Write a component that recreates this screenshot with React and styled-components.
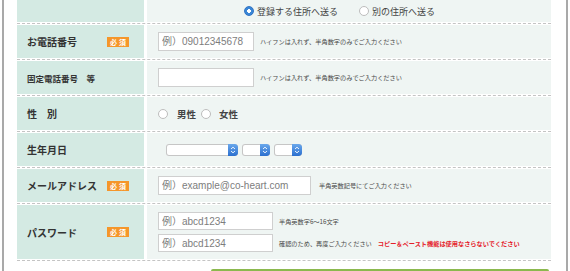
import styled, { createGlobalStyle } from "styled-components";

const Global = createGlobalStyle`
  html, body {
    margin: 0;
    padding: 0;
    overflow: hidden;
    background: #fff;
  }
  body {
    font-family: "Noto Sans CJK JP", "Liberation Sans", sans-serif;
    color: #333;
  }
`;

const Frame = styled.div`
  margin-left: 2px;
  width: 534px;
  border-left: 2px solid #a9a9a9;
  border-right: 2px solid #a9a9a9;
  padding: 0 15px 0 13px;
  height: 271px;
  overflow: hidden;
`;

const Table = styled.div`
  display: flex;
  flex-direction: column;
  width: 534px;
`;

const Row = styled.div`
  display: grid;
  grid-template-columns: 127px 1fr;
  column-gap: 3px;
  padding: ${(p) => (p.$first ? "0 0 1px" : "1px 0")};
  border-bottom: 1px dashed #c4c4c4;
  height: ${(p) => p.$h}px;
`;

const Label = styled.div`
  background: #d4eae3;
  display: flex;
  align-items: center;
  justify-content: space-between;
  padding: 0 15px 0 10px;
  font-size: ${(p) => p.$size || 10}px;
  font-weight: 700;
  color: #333;
  white-space: pre;
`;

const Badge = styled.span`
  display: inline-flex;
  align-items: center;
  justify-content: center;
  width: 22px;
  height: 10px;
  background: #f5962a;
  color: #fff;
  font-size: 7px;
  font-weight: 700;
  letter-spacing: 2px;
  padding-left: 2px;
  box-sizing: border-box;
`;

const Value = styled.div`
  background: #eff5f3;
  display: flex;
  flex-direction: ${(p) => (p.$stack ? "column" : "row")};
  justify-content: ${(p) => (p.$stack ? "center" : "flex-start")};
  align-items: ${(p) => (p.$stack ? "flex-start" : "center")};
  padding-left: ${(p) => p.$pad ?? 11}px;
  gap: ${(p) => (p.$stack ? "4px" : "0")};
`;

const Line = styled.div`
  display: flex;
  align-items: center;
`;

const Input = styled.input`
  width: ${(p) => p.$w}px;
  height: ${(p) => p.$h || 19}px;
  box-sizing: border-box;
  border: 1px solid #cfcfcf;
  background: #fff;
  padding: 0 0 0 3px;
  margin: 0 ${(p) => p.$gap || 6}px 0 0;
  font-family: "Liberation Sans", "Noto Sans CJK JP", sans-serif;
  font-size: 10px;
  outline: none;
  &::placeholder {
    color: #7d7d7d;
  }
`;

const Hint = styled.span`
  font-size: 6.2px;
  color: ${(p) => (p.$red ? "#e5202a" : "#4a4a4a")};
  font-weight: ${(p) => (p.$red ? 700 : 400)};
  margin-left: ${(p) => p.$ml || 0}px;
  white-space: nowrap;
`;

const Radio = styled.span`
  display: inline-block;
  width: 10px;
  height: 10px;
  border-radius: 50%;
  box-sizing: border-box;
  background: ${(p) =>
    p.$on ? "radial-gradient(circle, #fff 0 1.6px, #3a86d6 2px)" : "#fff"};
  border: 1px solid ${(p) => (p.$on ? "#2f73c4" : "#bdbdbd")};
  margin-right: ${(p) => p.$mr || 4}px;
`;

const Choice = styled.span`
  display: inline-flex;
  align-items: center;
  font-size: ${(p) => p.$size || 9}px;
  font-weight: ${(p) => p.$weight || 400};
  color: #444;
  margin-right: ${(p) => p.$mr || 0}px;
`;

const Select = styled.div`
  display: flex;
  width: ${(p) => p.$w}px;
  height: 12px;
  margin-right: 4px;
  border-radius: 3px;
  background: #fff;
  box-shadow: 0 0 0 1px #c6c6c6 inset;
  justify-content: flex-end;
  overflow: hidden;
`;

const Stepper = styled.div`
  width: 10px;
  height: 12px;
  border-radius: 0 3px 3px 0;
  background: linear-gradient(#6aa8ec, #2b6fcf);
  display: flex;
  align-items: center;
  justify-content: center;
`;

const Chevrons = () => (
  <svg width="6" height="8" viewBox="0 0 6 8">
    <path
      d="M1 3 L3 1.2 L5 3 M1 5 L3 6.8 L5 5"
      fill="none"
      stroke="#fff"
      strokeWidth="0.9"
    />
  </svg>
);

const Footer = styled.div`
  display: flex;
  justify-content: flex-end;
  padding: 8px 2px 0 0;
  width: 534px;
  box-sizing: border-box;
`;

const Button = styled.div`
  width: 338px;
  height: 30px;
  background: linear-gradient(#8cb94f, #74a33a);
  border-radius: 2px;
`;

export default function App() {
  return (
    <>
      <Global />
      <Frame>
        <Table>
          <Row $first $h={22}>
            <Label />
            <Value $pad={97}>
              <Choice $mr={21}>
                <Radio $on $mr={3} />
                登録する住所へ送る
              </Choice>
              <Choice>
                <Radio $mr={3} />
                別の住所へ送る
              </Choice>
            </Value>
          </Row>
          <Row $h={33}>
            <Label>
              お電話番号<Badge>必須</Badge>
            </Label>
            <Value>
              <Input $w={96} placeholder="例）09012345678" />
              <Hint>ハイフンは入れず、半角数字のみでご入力ください</Hint>
            </Value>
          </Row>
          <Row $h={33}>
            <Label $size={8.5}>固定電話番号　等</Label>
            <Value>
              <Input $w={96} />
              <Hint>ハイフンは入れず、半角数字のみでご入力ください</Hint>
            </Value>
          </Row>
          <Row $h={33}>
            <Label>性　別</Label>
            <Value>
              <Choice $size={9.5} $weight={700} $mr={5}>
                <Radio $mr={9} />
                男性
              </Choice>
              <Choice $size={9.5} $weight={700}>
                <Radio $mr={8} />
                女性
              </Choice>
            </Value>
          </Row>
          <Row $h={33}>
            <Label>生年月日</Label>
            <Value $pad={19}>
              <Select $w={72}>
                <Stepper>
                  <Chevrons />
                </Stepper>
              </Select>
              <Select $w={28}>
                <Stepper>
                  <Chevrons />
                </Stepper>
              </Select>
              <Select $w={28}>
                <Stepper>
                  <Chevrons />
                </Stepper>
              </Select>
            </Value>
          </Row>
          <Row $h={33}>
            <Label>
              メールアドレス<Badge>必須</Badge>
            </Label>
            <Value>
              <Input $w={153} $gap={8} placeholder="例）example@co-heart.com" />
              <Hint>半角英数記号にてご入力ください</Hint>
            </Value>
          </Row>
          <Row $h={54}>
            <Label>
              パスワード<Badge>必須</Badge>
            </Label>
            <Value $stack>
              <Line>
                <Input $w={115} $h={18} placeholder="例）abcd1234" />
                <Hint>半角英数字6〜16文字</Hint>
              </Line>
              <Line>
                <Input $w={115} $h={18} placeholder="例）abcd1234" />
                <Hint>確認のため、再度ご入力ください</Hint>
                <Hint $red $ml={6}>
                  コピー＆ペースト機能は使用なさらないでください
                </Hint>
              </Line>
            </Value>
          </Row>
        </Table>
        <Footer>
          <Button />
        </Footer>
      </Frame>
    </>
  );
}
